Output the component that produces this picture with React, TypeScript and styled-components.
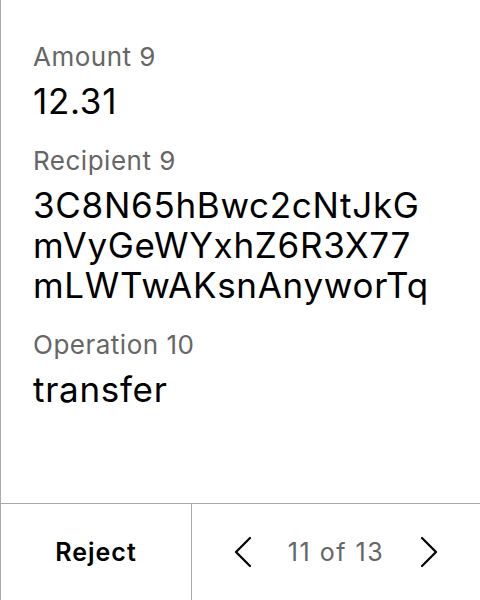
import React from "react";
import styled, { createGlobalStyle } from "styled-components";

const Global = createGlobalStyle`
  html, body { margin: 0; padding: 0; background: #fff; }
  body { font-family: Inter, "Noto Sans", sans-serif; }
`;

const Screen = styled.div`
  width: 480px;
  height: 600px;
  box-sizing: border-box;
  border-left: 1px solid #aaaaaa;
  display: flex;
  flex-direction: column;
  background: #fff;
`;

const Body = styled.div`
  flex: 1;
  padding: 41px 32px 0 32px;
  display: flex;
  flex-direction: column;
  gap: 24px;
`;

const Field = styled.div`
  display: flex;
  flex-direction: column;
  gap: 8px;
`;

const Label = styled.div`
  font-size: 26px;
  line-height: 32px;
  letter-spacing: 0.5px;
  color: #666666;
`;

const Value = styled.div`
  font-size: 35px;
  line-height: 40px;
  letter-spacing: 0.7px;
  color: #000;
  white-space: nowrap;
`;

const Footer = styled.div`
  height: 96px;
  border-top: 1px solid #aaaaaa;
  display: grid;
  grid-template-columns: 191px 1fr;
`;

const RejectButton = styled.button`
  border: none;
  border-right: 1px solid #aaaaaa;
  background: none;
  font-family: inherit;
  font-size: 25px;
  font-weight: 600;
  letter-spacing: 1px;
  color: #000;
  padding: 0;
`;

const Pager = styled.div`
  display: flex;
  align-items: center;
  justify-content: center;
  gap: 36px;
`;

const Arrow = styled.button`
  border: none;
  background: none;
  padding: 0;
  display: flex;
  align-items: center;
`;

const PageText = styled.span`
  font-size: 25px;
  letter-spacing: 1.5px;
  color: #666666;
`;

const Chevron = ({ dir }: { dir: "left" | "right" }) => (
  <svg width="18" height="32" viewBox="0 0 18 32" fill="none">
    <path
      d={dir === "left" ? "M16 2 L2 16 L16 30" : "M2 2 L16 16 L2 30"}
      stroke="#000"
      strokeWidth="2.2"
      strokeLinecap="round"
      strokeLinejoin="round"
    />
  </svg>
);

export default function App() {
  return (
    <>
      <Global />
      <Screen>
        <Body>
          <Field>
            <Label>Amount 9</Label>
            <Value>12.31</Value>
          </Field>
          <Field>
            <Label>Recipient 9</Label>
            <Value>
              3C8N65hBwc2cNtJkG
              <br />
              mVyGeWYxhZ6R3X77
              <br />
              mLWTwAKsnAnyworTq
            </Value>
          </Field>
          <Field>
            <Label>Operation 10</Label>
            <Value>transfer</Value>
          </Field>
        </Body>
        <Footer>
          <RejectButton>Reject</RejectButton>
          <Pager>
            <Arrow>
              <Chevron dir="left" />
            </Arrow>
            <PageText>11 of 13</PageText>
            <Arrow>
              <Chevron dir="right" />
            </Arrow>
          </Pager>
        </Footer>
      </Screen>
    </>
  );
}
